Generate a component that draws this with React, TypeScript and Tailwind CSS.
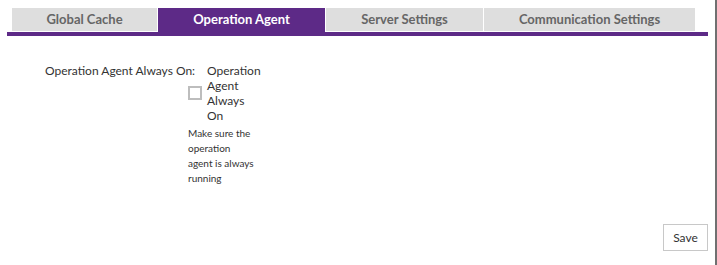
import React from "react";

const tabs = [
  { label: "Global Cache", w: "w-[145px]", active: false },
  { label: "Operation Agent", w: "w-[167px]", active: true },
  { label: "Server Settings", w: "w-[157px]", active: false },
  { label: "Communication Settings", w: "w-[211px]", active: false },
];

export default function App() {
  return (
    <div
      className="h-[265px] w-[717px] bg-white border-r-2 border-[#707070] text-[#333]"
      style={{ fontFamily: "Lato, 'Noto Sans', sans-serif" }}
    >
      <div className="ml-[7px] w-[701px] pt-2">
        <div className="ml-[5px] flex items-start gap-px">
          {tabs.map((t) => (
            <div
              key={t.label}
              className={
                t.active
                  ? `${t.w} h-[24px] bg-[#5d2a87] text-white flex items-center justify-center text-[13px] font-bold`
                  : `${t.w} h-[23px] bg-[#dedede] text-[#666] flex items-center justify-center text-[13px] font-bold`
              }
            >
              {t.label}
            </div>
          ))}
        </div>
        <div className="h-[4px] bg-[#5d2a87]" />
        <div className="flex pt-[27px] pl-[38px] text-[12px] leading-[15px]">
          <div className="w-[143px] whitespace-nowrap text-[#333]">Operation Agent Always On:</div>
          <div className="w-[75px]">
            <div className="flex items-center gap-[5px]">
              <div className="h-[14px] w-[14px] border-2 border-[#bdbdbd] shrink-0" />
              <div className="w-[56px]">Operation Agent Always On</div>
            </div>
            <div className="mt-[3px] w-[68px] text-[10px] leading-[15px]">
              Make sure the operation agent is always running
            </div>
          </div>
        </div>
        <div className="flex justify-end mt-[38px]">
          <button className="h-[27px] w-[45px] border border-[#c8c8c8] bg-white text-[12px] text-[#333]">
            Save
          </button>
        </div>
      </div>
    </div>
  );
}
